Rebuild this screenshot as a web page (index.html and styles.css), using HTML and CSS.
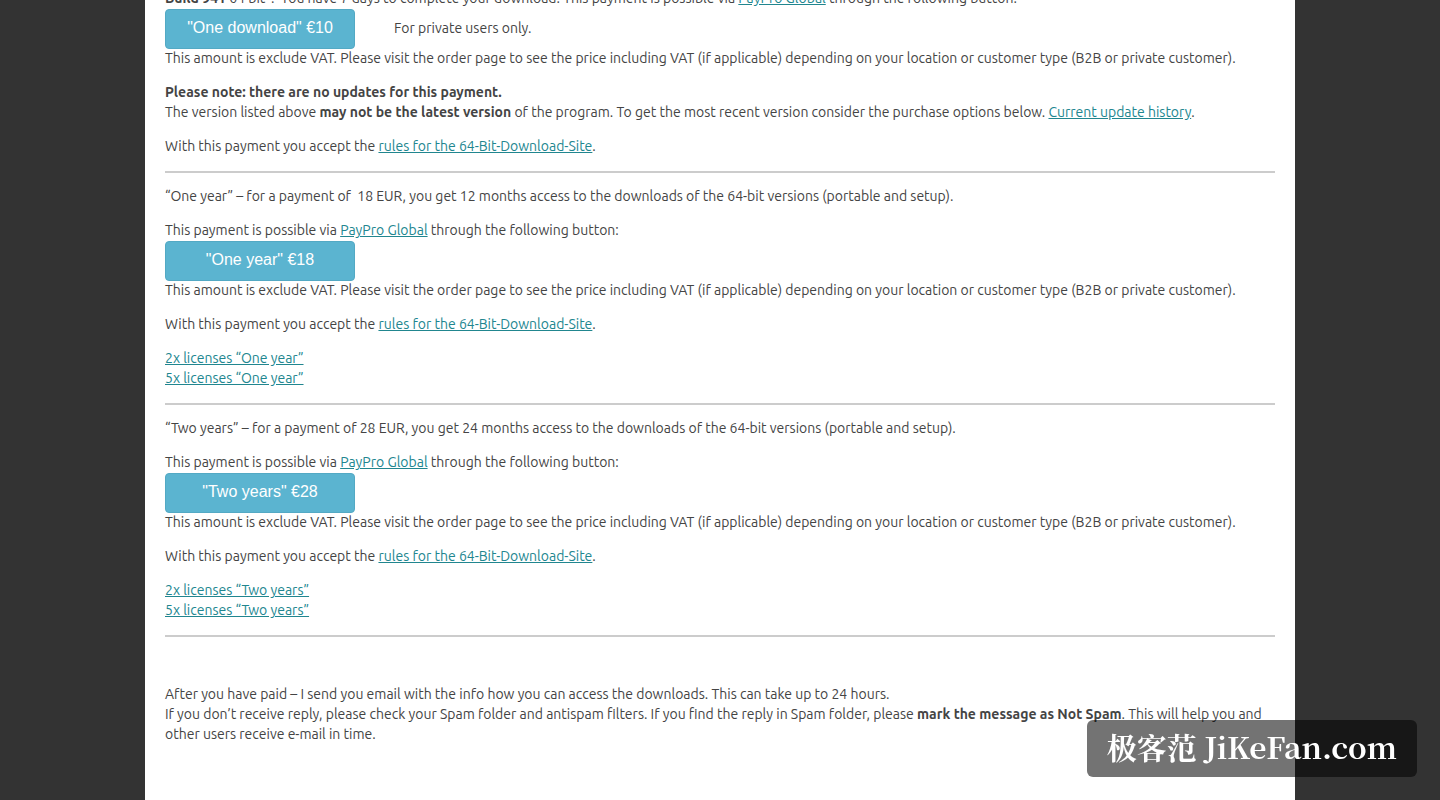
FILE: index.html
```html
<!DOCTYPE html>
<html lang="en">
<head>
    <meta charset="UTF-8">
    <meta name="viewport" content="width=device-width, initial-scale=1.0">
    <title>64-bit download</title>
    <link rel="stylesheet" href="styles.css">
</head>
<body>
    <main class="page">
        <!-- one download -->
        <section>
            <p class="intro"><strong>Build 941</strong> 64 bit”.&nbsp; You have 7 days to complete your download. This payment is possible via <a href="#">PayPro Global</a> through the following button:</p>
            <div class="buy">
                <button type="button">"One download" €10</button>
                <span>For private users only.</span>
            </div>
            <p>This amount is exclude VAT. Please visit the order page to see the price including VAT (if applicable) depending on your location or customer type (B2B or private customer).</p>
            <p><strong>Please note: there are no updates for this payment.</strong><br>
            The version listed above <strong>may not be the latest version</strong> of the program. To get the most recent version consider the purchase options below. <a href="#">Current update history</a>.</p>
            <p>With this payment you accept the <a href="#">rules for the 64-Bit-Download-Site</a>.</p>
        </section>
        <hr>
        <!-- one year -->
        <section>
            <p>“One year” – for a payment of&nbsp; 18 EUR, you get 12 months access to the downloads of the 64-bit versions (portable and setup).</p>
            <p class="intro">This payment is possible via <a href="#">PayPro Global</a> through the following button:</p>
            <div class="buy">
                <button type="button">"One year" €18</button>
            </div>
            <p>This amount is exclude VAT. Please visit the order page to see the price including VAT (if applicable) depending on your location or customer type (B2B or private customer).</p>
            <p>With this payment you accept the <a href="#">rules for the 64-Bit-Download-Site</a>.</p>
            <p><a href="#">2x licenses “One year”</a><br>
            <a href="#">5x licenses “One year”</a></p>
        </section>
        <hr>
        <!-- two years -->
        <section>
            <p>“Two years” – for a payment of 28 EUR, you get 24 months access to the downloads of the 64-bit versions (portable and setup).</p>
            <p class="intro">This payment is possible via <a href="#">PayPro Global</a> through the following button:</p>
            <div class="buy">
                <button type="button">"Two years" €28</button>
            </div>
            <p>This amount is exclude VAT. Please visit the order page to see the price including VAT (if applicable) depending on your location or customer type (B2B or private customer).</p>
            <p>With this payment you accept the <a href="#">rules for the 64-Bit-Download-Site</a>.</p>
            <p><a href="#">2x licenses “Two years”</a><br>
            <a href="#">5x licenses “Two years”</a></p>
        </section>
        <hr>
        <p>&nbsp;</p>
        <p>After you have paid – I send you email with the info how you can access the downloads. This can take up to 24 hours.<br>
        If you don’t receive reply, please check your Spam folder and antispam filters. If you find the reply in Spam folder, please <strong>mark the message as Not Spam</strong>. This will help you and other users receive e-mail in time.</p>
    </main>
    <div class="watermark" lang="zh">极客范 JiKeFan.com</div>
</body>
</html>
```

FILE: styles.css
```css
*{
    box-sizing: border-box;
}

body{
    margin: 0;
    background-color: #333;
    color: #444;
    font: 14px/20px Ubuntu, Roboto, sans-serif;
    overflow: hidden;
}

.page{
    max-width: 1150px;
    min-height: 100vh;
    margin: -12px auto 0;
    padding: 0 20px 56px;
    background-color: #fff;
}

p{
    margin: 0 0 14px;
}

.intro{
    margin-bottom: 0;
}

a{
    color: #21868f;
    text-decoration: underline;
}

hr{
    height: 2px;
    margin: 15px 0 13px;
    border: 0;
    background-color: #ccc;
}

/* button row */
.buy{
    display: flex;
    align-items: center;
    gap: 39px;
    height: 40px;
}
.buy button{
    position: relative;
    top: 1px;
    width: 190px;
    height: 40px;
    padding: 0 0 3px;
    border: 1px solid #53a9c4;
    border-radius: 4px;
    background-color: #5bb4d0;
    color: #fff;
    font: 16px "Liberation Sans", Arial, sans-serif;
}

/* site mark in the corner */
.watermark{
    position: fixed;
    right: 23px;
    bottom: 23px;
    padding: 0 20px 4px;
    border-radius: 6px;
    background-color: rgba(0, 0, 0, 0.55);
    color: #fff;
    font: bold 30px/53px "Noto Serif CJK SC", "Noto Sans CJK SC", serif;
    white-space: nowrap;
}
```
